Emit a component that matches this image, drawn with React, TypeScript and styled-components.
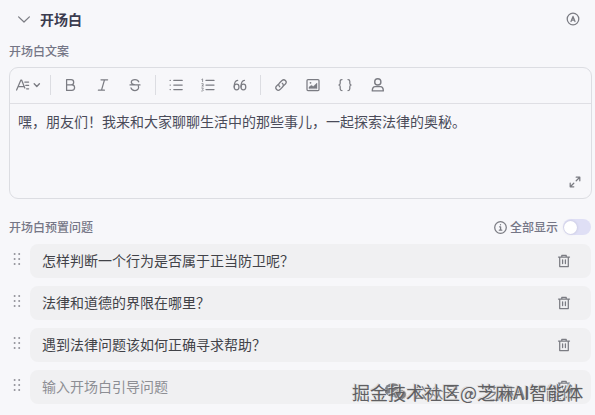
import React from 'react';
import styled, { createGlobalStyle } from 'styled-components';

const GlobalStyle = createGlobalStyle`
  * {
    box-sizing: border-box;
  }
  body {
    margin: 0;
    background: #f7f7fa;
    font-family: "Noto Sans CJK SC", "Noto Sans", sans-serif;
    color: #3f4052;
  }
`;

const Page = styled.div`
  position: relative;
  height: 415px;
  padding: 7px 3px 0 9px;
  overflow: hidden;
`;

const Header = styled.div`
  display: flex;
  align-items: center;
  height: 24px;
  margin-bottom: 11px;
  padding: 0 12px 0 8px;
`;

const Title = styled.h3`
  flex: 1;
  margin: 0 0 0 9px;
  font-size: 14px;
  line-height: 22px;
  font-weight: 600;
  color: #3b3c4f;
`;

const Label = styled.div`
  font-size: 12px;
  line-height: 18px;
  font-weight: 500;
  color: #757686;
`;

const Icon = styled.svg`
  display: block;
  flex-shrink: 0;
  fill: none;
  stroke: #7b7c83;
  stroke-width: 1.25;
  stroke-linecap: round;
  stroke-linejoin: round;
`;

const Editor = styled.div`
  display: flex;
  flex-direction: column;
  height: 132px;
  margin-top: 7px;
  border: 1px solid #dcdde2;
  border-radius: 9px;
`;

const Toolbar = styled.div`
  display: flex;
  align-items: center;
  height: 36px;
  padding-bottom: 2px;
  border-bottom: 1px solid #dfdfe4;
`;

const ToolButton = styled.button<{ $wide?: boolean }>`
  display: flex;
  align-items: center;
  justify-content: center;
  width: ${({ $wide }) => ($wide ? '36px' : '32px')};
  height: 28px;
  padding: 0;
  border: none;
  background: none;
`;

const Divider = styled.span`
  width: 1px;
  height: 20px;
  margin: 0 4px;
  background: #dcdde2;
`;

const EditorText = styled.div`
  flex: 1;
  padding: 6px 8px;
  font-size: 14px;
  line-height: 22px;
  color: #4a4b59;
`;

const EditorFooter = styled.div`
  display: flex;
  justify-content: flex-end;
  padding: 0 10px 10px;
`;

const PresetHeader = styled.div`
  display: flex;
  align-items: center;
  justify-content: space-between;
  height: 18px;
  margin-top: 19px;
  padding-right: 1px;
`;

const ShowAll = styled.div`
  display: flex;
  align-items: center;
  gap: 3px;
`;

const Switch = styled.span`
  display: flex;
  align-items: center;
  width: 28px;
  height: 16px;
  margin-left: 2px;
  padding: 0 1px;
  border-radius: 8px;
  background: #dfdff5;
`;

const Knob = styled.span`
  width: 13px;
  height: 13px;
  border-radius: 50%;
  background: #fff;
  box-shadow: 0 0 3px rgba(60, 60, 100, 0.2);
`;

const List = styled.div`
  display: flex;
  flex-direction: column;
  gap: 8px;
  margin-top: 8px;
  padding-right: 1px;
`;

const Row = styled.div`
  display: flex;
  align-items: center;
  height: 34px;
`;

const Handle = styled.div`
  width: 21px;
  padding: 0 0 4px 4px;
`;

const Question = styled.div`
  flex: 1;
  display: flex;
  align-items: center;
  justify-content: space-between;
  height: 34px;
  padding: 0 20px 0 12px;
  border-radius: 8px;
  background: #f0f0f2;
`;

const QuestionText = styled.span<{ $muted?: boolean }>`
  padding-bottom: 2px;
  font-size: 14px;
  line-height: 22px;
  color: ${({ $muted }) => ($muted ? '#8d8e94' : '#414248')};
`;

const Watermark = styled.div`
  position: absolute;
  left: 352px;
  top: 379px;
  font-size: 18px;
  line-height: 26px;
  white-space: nowrap;
  color: #5f5f62;
  text-shadow: -1px -1px 0 #dcdcde;
`;

const AccountMark = styled.div`
  position: absolute;
  left: 384px;
  top: 379px;
  display: flex;
  align-items: center;
  height: 26px;
  font-size: 16px;
  white-space: nowrap;
  color: #808083;
  text-shadow: -1px -1px 0 #e8e8ea;
`;

const AccountName = styled.span`
  margin-left: 5px;
`;

const QUESTIONS = [
  '怎样判断一个行为是否属于正当防卫呢？',
  '法律和道德的界限在哪里？',
  '遇到法律问题该如何正确寻求帮助？',
];

const HeadingIcon = () => (
  <Icon width="26" height="14" viewBox="0 0 26 14">
    <path d="M1.6 12 L5.9 2 H6.6 L9.8 10 M3.3 8.5 H9.1 M9.8 4 H13.6 M10.8 7.4 H13.6 M11.6 10.8 H13.6" />
    <path d="M19.2 5.8 L21.8 8.4 L24.4 5.8" strokeWidth="1.4" />
  </Icon>
);

const BoldIcon = () => (
  <Icon width="14" height="14" viewBox="0 0 14 14">
    <path d="M2.6 1.6 H7.1 A2.6 2.6 0 0 1 7.1 6.8 H2.6 Z M2.6 6.8 H7.8 A2.8 2.8 0 0 1 7.8 12.4 H2.6 Z" />
  </Icon>
);

const ItalicIcon = () => (
  <Icon width="14" height="14" viewBox="0 0 14 14">
    <path d="M5 1.8 H11.6 M2.4 12.2 H8.4 M8.5 1.8 L5.5 12.2" />
  </Icon>
);

const StrikeIcon = () => (
  <Icon width="14" height="14" viewBox="0 0 14 14">
    <path d="M10.7 3.8 C10.2 2.3 8.8 1.5 7 1.5 C4.8 1.5 3.3 2.7 3.3 4.3 C3.3 5.8 4.6 6.4 7 6.9 M2 6.9 H12 M10.3 8 C11.3 10.3 9.8 12.5 7 12.5 C4.8 12.5 3.4 11.6 3 9.9" />
  </Icon>
);

const BulletIcon = () => (
  <Icon width="14" height="14" viewBox="0 0 14 14">
    <path d="M4.8 2.4 H13.2 M4.8 7 H13.2 M4.8 11.6 H13.2 M1.1 2.4 H1.3 M1.1 7 H1.3 M1.1 11.6 H1.3" />
  </Icon>
);

const OrderedIcon = () => (
  <Icon width="14" height="14" viewBox="0 0 14 14">
    <path d="M5 2.4 H13 M5 7 H13 M5 11.6 H13" />
    <path d="M0.8 1.4 L1.6 0.9 V3.7 M0.8 5.7 H2.2 V6.8 L0.8 8 H2.5 M0.7 10 H2.3 L1.6 11.3 L2.4 12.2 L1.7 13 H0.7" strokeWidth="0.8" />
  </Icon>
);

const QuoteIcon = () => (
  <Icon width="14" height="14" viewBox="0 0 14 14">
    <path d="M4.7 2.3 C2.4 2.4 1.2 4.8 1.2 9.1 M11.5 2.3 C9.2 2.4 8 4.8 8 9.1" />
    <ellipse cx="3.6" cy="9" rx="2.4" ry="2.8" />
    <ellipse cx="10.4" cy="9" rx="2.4" ry="2.8" />
  </Icon>
);

const LinkIcon = () => (
  <Icon width="14" height="14" viewBox="0 0 14 14">
    <path d="M5.8 8.8 C4.2 7.4 4.5 6 5.7 4.8 L8 2.5 C10.4 0.5 13.5 3.5 11.6 5.8 L9.5 7.9 M8.3 5.3 C9.8 6.7 9.5 8.1 8.3 9.3 L6 11.6 C3.6 13.5 0.5 10.6 2.4 8.2 L4.2 6.4" />
  </Icon>
);

const ImageIcon = () => (
  <Icon width="14" height="14" viewBox="0 0 14 14">
    <rect x="1" y="1.5" width="12" height="11" rx="1" />
    <path d="M3 10.5 V9 L5.4 7.3 L7.2 8.5 L11 5 V10.5 Z" fill="#7b7c83" strokeWidth="0.4" />
    <circle cx="4.5" cy="4.8" r="0.9" fill="#7b7c83" stroke="none" />
  </Icon>
);

const BracesIcon = () => (
  <Icon width="14" height="14" viewBox="0 0 14 14">
    <path d="M4 1.5 C2.5 1.5 2.2 2.1 2.2 3.3 V5.2 C2.2 6.3 1.8 6.8 0.9 7 C1.8 7.2 2.2 7.7 2.2 8.8 V10.7 C2.2 11.9 2.5 12.5 4 12.5 M10 1.5 C11.5 1.5 11.8 2.1 11.8 3.3 V5.2 C11.8 6.3 12.2 6.8 13.1 7 C12.2 7.2 11.8 7.7 11.8 8.8 V10.7 C11.8 11.9 11.5 12.5 10 12.5" />
  </Icon>
);

const UserIcon = () => (
  <Icon width="14" height="14" viewBox="0 0 14 14">
    <circle cx="7.8" cy="3.9" r="3.1" strokeWidth="1.4" />
    <path d="M5.2 8.6 H10.4 C12.4 8.6 13.3 10 13.3 12.9 H2.3 C2.3 10 3.2 8.6 5.2 8.6 Z" strokeWidth="1.4" />
  </Icon>
);

const TrashIcon = () => (
  <Icon width="14" height="14" viewBox="0 0 14 14">
    <path d="M1.5 3 H12.5 M4.8 2.6 V1.3 H9.2 V2.6 M2.7 3.2 V12.6 H11.3 V3.2 M5.6 5.8 V9.6 M8.4 5.8 V9.6" />
  </Icon>
);

const DragDots = () => (
  <Icon width="8" height="14" viewBox="0 0 8 14">
    {[2, 7, 12].map((y) => (
      <React.Fragment key={y}>
        <circle cx="1.6" cy={y} r="1" fill="#929299" stroke="none" />
        <circle cx="6.2" cy={y} r="1" fill="#929299" stroke="none" />
      </React.Fragment>
    ))}
  </Icon>
);

const App: React.FC = () => (
  <>
    <GlobalStyle />
    <Page>
      <Header>
        <Icon width="14" height="14" viewBox="0 0 14 14">
          <path d="M1.6 4.9 L7 10 L12.4 4.9" />
        </Icon>
        <Title>开场白</Title>
        <Icon width="14" height="14" viewBox="0 0 14 14">
          <circle cx="7" cy="7" r="5.8" />
          <path d="M5 9.5 L7 4.4 L9 9.5 M5.7 8 H8.3" />
        </Icon>
      </Header>

      <Label>开场白文案</Label>

      <Editor>
        <Toolbar>
          <ToolButton $wide><HeadingIcon /></ToolButton>
          <Divider />
          <ToolButton><BoldIcon /></ToolButton>
          <ToolButton><ItalicIcon /></ToolButton>
          <ToolButton><StrikeIcon /></ToolButton>
          <Divider />
          <ToolButton><BulletIcon /></ToolButton>
          <ToolButton><OrderedIcon /></ToolButton>
          <ToolButton><QuoteIcon /></ToolButton>
          <Divider />
          <ToolButton><LinkIcon /></ToolButton>
          <ToolButton><ImageIcon /></ToolButton>
          <ToolButton><BracesIcon /></ToolButton>
          <ToolButton><UserIcon /></ToolButton>
        </Toolbar>
        <EditorText>嘿，朋友们！我来和大家聊聊生活中的那些事儿，一起探索法律的奥秘。</EditorText>
        <EditorFooter>
          <Icon width="12" height="12" viewBox="0 0 12 12">
            <path d="M7.2 1.2 H10.8 V4.8 M10.5 1.5 L7.2 4.8 M1.2 7.2 V10.8 H4.8 M1.5 10.5 L4.8 7.2" />
          </Icon>
        </EditorFooter>
      </Editor>

      <PresetHeader>
        <Label>开场白预置问题</Label>
        <ShowAll>
          <Icon width="13" height="13" viewBox="0 0 13 13">
            <circle cx="6.5" cy="6.5" r="5.8" />
            <path d="M6.5 3.6 V3.8 M5.6 5.8 H6.6 V9.2 M5.3 9.2 H7.8" />
          </Icon>
          <Label>全部显示</Label>
          <Switch><Knob /></Switch>
        </ShowAll>
      </PresetHeader>

      <List>
        {QUESTIONS.map((question) => (
          <Row key={question}>
            <Handle><DragDots /></Handle>
            <Question>
              <QuestionText>{question}</QuestionText>
              <TrashIcon />
            </Question>
          </Row>
        ))}
        <Row>
          <Handle><DragDots /></Handle>
          <Question>
            <QuestionText $muted>输入开场白引导问题</QuestionText>
            <TrashIcon />
          </Question>
        </Row>
      </List>

      <AccountMark>
        <Icon width="23" height="18" viewBox="0 0 23 18">
          <ellipse cx="9" cy="7" rx="8.5" ry="6.8" fill="#808083" stroke="none" />
          <ellipse cx="16" cy="11.5" rx="6.5" ry="5.3" fill="#808083" stroke="#e8e8ea" strokeWidth="0.8" />
        </Icon>
        <AccountName>公众号 · 芝麻AI智能体</AccountName>
      </AccountMark>
      <Watermark>掘金技术社区@芝麻AI智能体</Watermark>
    </Page>
  </>
);

export default App;
